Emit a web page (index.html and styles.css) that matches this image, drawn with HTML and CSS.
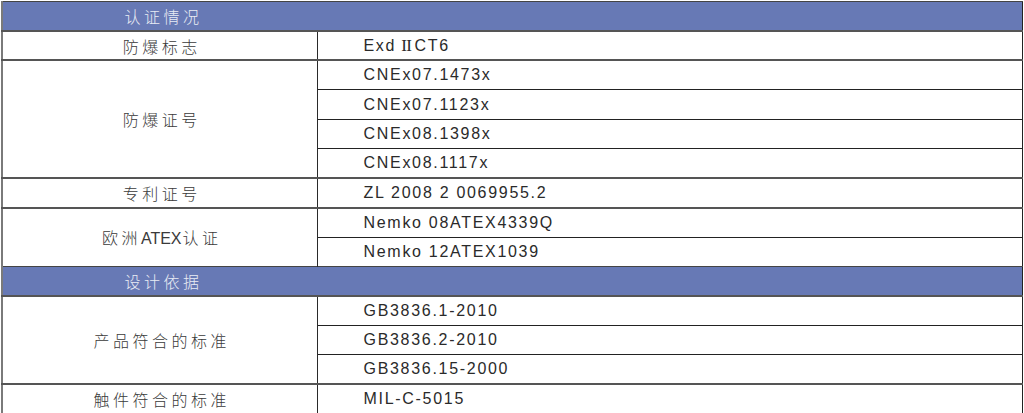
FILE: index.html
```html
<!DOCTYPE html>
<html lang="zh">
<head>
<meta charset="utf-8">
<link rel="stylesheet" href="styles.css">
</head>
<body>
<table class="spec">
  <colgroup><col class="c-label"><col class="c-value"></colgroup>
  <tr class="section"><td colspan="2"><div class="sec-title">认证情况</div></td></tr>
  <tr><td class="label">防爆标志</td><td class="value">Exd<span class="roman">II</span>CT6</td></tr>
  <tr><td class="label" rowspan="4">防爆证号</td><td class="value">CNEx07.1473x</td></tr>
  <tr class="sub"><td class="value">CNEx07.1123x</td></tr>
  <tr class="sub"><td class="value">CNEx08.1398x</td></tr>
  <tr class="sub"><td class="value">CNEx08.1117x</td></tr>
  <tr><td class="label">专利证号</td><td class="value">ZL 2008 2 0069955.2</td></tr>
  <tr><td class="label" rowspan="2">欧洲<span class="latin">ATEX</span>认证</td><td class="value">Nemko 08ATEX4339Q</td></tr>
  <tr class="sub"><td class="value">Nemko 12ATEX1039</td></tr>
  <tr class="section"><td colspan="2"><div class="sec-title">设计依据</div></td></tr>
  <tr><td class="label" rowspan="3">产品符合的标准</td><td class="value">GB3836.1-2010</td></tr>
  <tr class="sub"><td class="value">GB3836.2-2010</td></tr>
  <tr class="sub"><td class="value">GB3836.15-2000</td></tr>
  <tr class="last"><td class="label">触件符合的标准</td><td class="value">MIL-C-5015</td></tr>
</table>
</body>
</html>
```

FILE: styles.css
```css
html, body {
  margin: 0;
  padding: 0;
  background: #ffffff;
}
body {
  padding: 1px 0 0 1px;
}
.spec {
  border-collapse: collapse;
  table-layout: fixed;
  width: 1020px;
  border-left: 2px solid #7a7a7a;
  border-right: 1px solid #222;
  border-top: 1px solid #8a8a8a;
}
.c-label { width: 315px; }
.c-value { width: 705px; }
.spec tr { height: 29.45px; }
.spec td {
  padding: 0;
  border-top: 2px solid #555;
  vertical-align: middle;
  color: #262626;
}
.spec tr.sub td.value {
  border-top: 1px solid #222;
}
.spec td.label {
  border-right: 1px solid #2a2a2a;
  text-align: center;
  font-family: "Noto Sans CJK SC", "Liberation Sans", sans-serif;
  font-size: 16px;
  letter-spacing: 3.5px;
  font-weight: 300;
  color: #3a3a3a;
  padding-left: 4px;
}
.latin {
  font-family: "Liberation Sans", Arial, sans-serif;
  letter-spacing: 0;
  font-weight: 400;
  font-size: 16px;
  margin-right: 1px;
}
.spec td.value {
  padding-left: 46px;
  font-family: "Liberation Sans", Arial, sans-serif;
  font-size: 16px;
  letter-spacing: 1.7px;
  color: #2a2a2a;
}
.roman {
  font-family: "Liberation Serif", serif;
  letter-spacing: -0.5px;
  font-size: 17px;
  margin: 0 3px 0 5px;
}
.spec tr.section td {
  background: #6779b5;
  border-top: 1px solid #444;
}
.sec-title {
  width: 315px;
  text-align: center;
  font-family: "Noto Sans CJK SC", sans-serif;
  font-size: 16px;
  font-weight: 300;
  letter-spacing: 3.5px;
  color: #e9ecf4;
  padding-left: 6px;
  box-sizing: border-box;
}
.spec tr.last td {
  border-bottom: 1px solid #ddd;
}
```
